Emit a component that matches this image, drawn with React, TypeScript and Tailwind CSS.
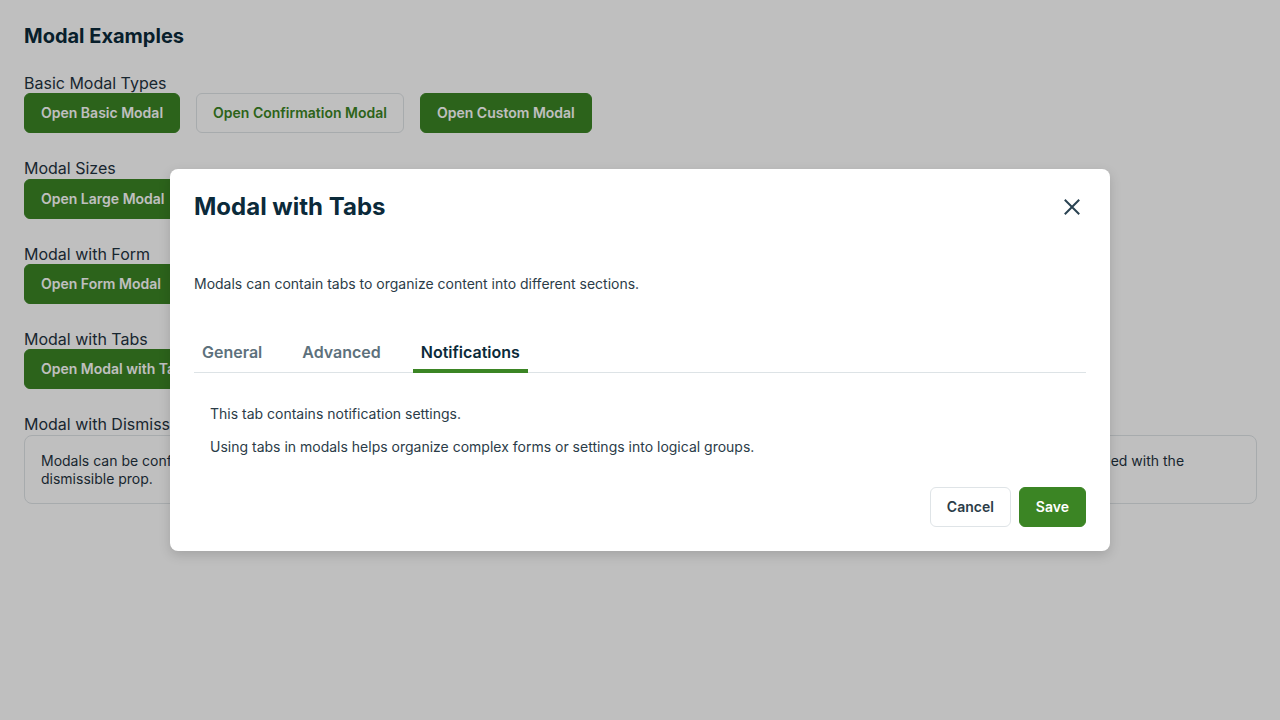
import React from "react";

const font = { fontFamily: "Inter, 'Noto Sans', sans-serif" };

function Btn({ children }: { children: React.ReactNode }) {
  return (
    <button className="h-10 rounded-md border border-[#3b8524] bg-[#3b8524] px-4 text-sm font-semibold text-white">
      {children}
    </button>
  );
}

function Section({ label, children }: { label: string; children: React.ReactNode }) {
  return (
    <div className="mb-6">
      <div className="pt-px text-base leading-[20.333px] text-[#1f3341]">{label}</div>
      <div className="flex gap-4">{children}</div>
    </div>
  );
}

export default function App() {
  return (
    <div className="relative min-h-[720px] w-full bg-white" style={font}>
      <div className="py-6 pl-6 pr-[23px]">
        <h1 className="mb-6 text-xl font-bold leading-6 text-[#0b2a3a]">Modal Examples</h1>
        <Section label="Basic Modal Types">
          <Btn>Open Basic Modal</Btn>
          <button className="h-10 rounded-md border border-[#dfe4e7] bg-white px-4 text-sm font-semibold text-[#3b8524]">
            Open Confirmation Modal
          </button>
          <Btn>Open Custom Modal</Btn>
        </Section>
        <Section label="Modal Sizes">
          <Btn>Open Large Modal</Btn>
          <Btn>Open Medium Modal</Btn>
          <Btn>Open Small Modal</Btn>
        </Section>
        <Section label="Modal with Form">
          <Btn>Open Form Modal</Btn>
        </Section>
        <Section label="Modal with Tabs">
          <Btn>Open Modal with Tabs</Btn>
        </Section>
        <div>
          <div className="pt-px text-base leading-[20.333px] text-[#1f3341]">Modal with Dismissible Option</div>
          <div className="rounded-lg border border-[#dfe4e7] px-4 pb-[15px] pt-4 text-sm leading-[18px] text-[#1f3341]">
            Modals can be configured to close when the user clicks outside of them, presses the Escape key, or clicks the close button in the header. This behavior is controlled with the dismissible prop.
          </div>
        </div>
      </div>

      <div className="absolute inset-0 bg-black/25" />

      <div className="absolute left-[170px] top-[169px] w-[940px] rounded-lg bg-white p-6 shadow-[0_4px_12px_rgba(0,0,0,0.15)]">
        <div className="flex items-center justify-between">
          <h2 className="text-2xl font-bold leading-7 text-[#0b2a3a]">Modal with Tabs</h2>
          <button className="mr-[2px] flex h-6 w-6 items-center justify-center text-[#2a4352]">
            <svg width="16" height="16" viewBox="0 0 16 16" fill="none" stroke="currentColor" strokeWidth="2" strokeLinecap="square">
              <path d="M1.5 1.5L14.5 14.5M14.5 1.5L1.5 14.5" />
            </svg>
          </button>
        </div>
        <p className="mt-[53px] text-sm leading-5 text-[#2b3c48]">
          Modals can contain tabs to organize content into different sections.
        </p>
        <div className="mt-[38px] flex gap-6 border-b border-[#dde3e6]">
          <div className="px-2 pb-[6px] pt-2 text-base font-semibold leading-6 text-[#5d717c]">General</div>
          <div className="px-2 pb-[6px] pt-2 text-base font-semibold leading-6 text-[#5d717c]">Advanced</div>
          <div className="-mb-px border-b-[4px] border-[#3b8524] px-2 pb-[5px] pt-2 text-base font-semibold leading-6 text-[#0b2a3a]">
            Notifications
          </div>
        </div>
        <div className="px-4 pt-[31px] text-sm leading-5 text-[#2b3c48]">
          <p className="mb-[13px]">This tab contains notification settings.</p>
          <p>Using tabs in modals helps organize complex forms or settings into logical groups.</p>
        </div>
        <div className="mt-[30px] flex justify-end gap-2">
          <button className="h-10 rounded-md border border-[#dfe4e7] bg-white px-4 text-sm font-semibold text-[#2b3c48]">
            Cancel
          </button>
          <button className="h-10 rounded-md border border-[#3b8524] bg-[#3b8524] px-4 text-sm font-semibold text-white">
            Save
          </button>
        </div>
      </div>
    </div>
  );
}
